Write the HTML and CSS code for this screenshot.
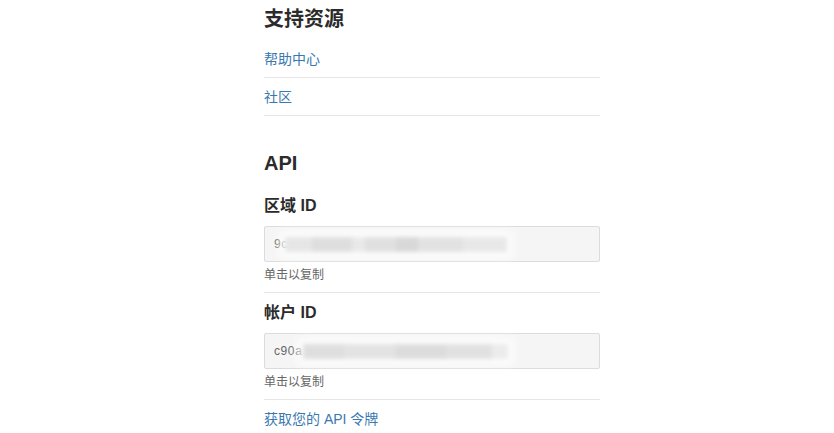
FILE: index.html
```html
<!DOCTYPE html>
<html lang="zh-CN">
<head>
<meta charset="utf-8">
<title>支持资源 / API</title>
<link rel="stylesheet" href="styles.css">
</head>
<body>
<main class="panel">
  <h2 class="section-title">支持资源</h2>
  <ul class="link-list">
    <li><a href="#">帮助中心</a></li>
    <li><a href="#">社区</a></li>
  </ul>

  <h2 class="section-title api-title">API</h2>

  <div class="id-group first-group">
    <h3 class="id-label">区域 ID</h3>
    <div class="id-field">9c<span class="redact redact-zone"></span></div>
    <div class="hint">单击以复制</div>
  </div>

  <div class="id-group">
    <h3 class="id-label">帐户 ID</h3>
    <div class="id-field">c90a<span class="redact redact-account"></span></div>
    <div class="hint">单击以复制</div>
  </div>

  <a class="token-link" href="#">获取您的 API 令牌</a>
</main>
</body>
</html>
```

FILE: styles.css
```css
html, body {
  margin: 0;
  padding: 0;
  background: #ffffff;
}

body {
  font-family: "Liberation Sans", "Noto Sans CJK SC", sans-serif;
  color: #333333;
}

.panel {
  width: 336px;
  margin-left: 264px;
  display: flex;
  flex-direction: column;
}

.section-title {
  margin: 5px 0 0;
  font-size: 20px;
  line-height: 28px;
  font-weight: bold;
  color: #2b2b2b;
}

.api-title {
  margin-top: 33px;
}

.link-list {
  list-style: none;
  margin: 7px 0 0;
  padding: 0;
}

.link-list li {
  padding: 9px 0 8px;
  line-height: 20px;
  font-size: 14px;
  border-bottom: 1px solid #e6e6e6;
}

.link-list a,
.token-link {
  color: #3a78b0;
  text-decoration: none;
}

.id-group {
  display: flex;
  flex-direction: column;
  padding: 10px 0 8px;
  border-bottom: 1px solid #e6e6e6;
}

.first-group {
  margin-top: 9px;
}

.id-label {
  margin: 0 0 10px;
  font-size: 16px;
  line-height: 20px;
  font-weight: bold;
  color: #2b2b2b;
}

.id-field {
  box-sizing: border-box;
  height: 36px;
  display: flex;
  align-items: center;
  padding: 0 9px;
  background: #f5f5f5;
  border: 1px solid #dcdcdc;
  border-radius: 2px;
  font-family: "Liberation Sans", "DejaVu Sans", sans-serif;
  font-size: 12px;
  color: #666666;
  letter-spacing: 0.6px;
}

.redact {
  display: inline-block;
  height: 15px;
  filter: blur(2px);
  box-shadow: 0 0 8px 6px rgba(255, 255, 255, 0.8);
}

.redact-zone {
  width: 222px;
  margin-left: -3px;
  background: linear-gradient(90deg,
    #e6e6e6 0, #e6e6e6 12%,
    #dedede 12%, #dedede 30%,
    #e9e9e9 30%, #e9e9e9 36%,
    #e0e0e0 36%, #e0e0e0 50%,
    #d8d8d8 50%, #d8d8d8 60%,
    #e2e2e2 60%, #e2e2e2 80%,
    #e8e8e8 80%, #e8e8e8 100%);
}

.redact-account {
  width: 205px;
  margin-left: 1px;
  background: linear-gradient(90deg,
    #dedede 0, #dedede 20%,
    #e3e3e3 20%, #e3e3e3 45%,
    #dcdcdc 45%, #dcdcdc 70%,
    #e1e1e1 70%, #e1e1e1 92%,
    #ececec 92%, #ececec 100%);
}

.hint {
  margin-top: 5px;
  font-size: 12px;
  line-height: 17px;
  color: #666666;
}

.token-link {
  padding-top: 9px;
  font-size: 14px;
  line-height: 20px;
  align-self: flex-start;
}
```
